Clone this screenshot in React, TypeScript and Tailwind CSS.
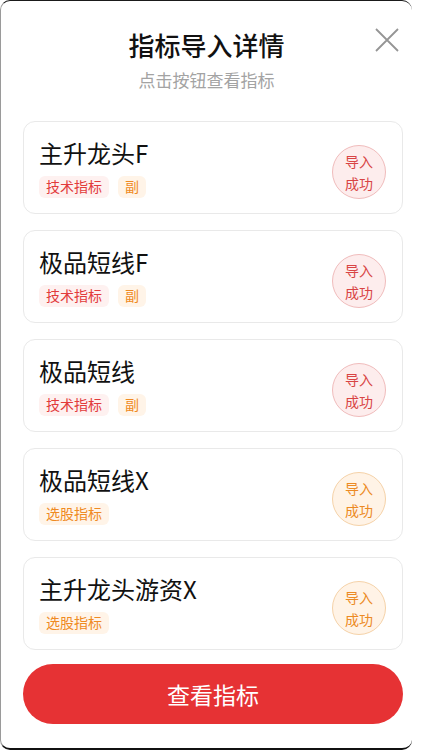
type Item = {
  name: string
  tags: { label: string, tone: "red" | "orange" }[]
  tone: "red" | "orange"
};

const items: Item[] = [
  { name: "主升龙头F", tags: [{ label: "技术指标", tone: "red" }, { label: "副", tone: "orange" }], tone: "red" },
  { name: "极品短线F", tags: [{ label: "技术指标", tone: "red" }, { label: "副", tone: "orange" }], tone: "red" },
  { name: "极品短线", tags: [{ label: "技术指标", tone: "red" }, { label: "副", tone: "orange" }], tone: "red" },
  { name: "极品短线X", tags: [{ label: "选股指标", tone: "orange" }], tone: "orange" },
  { name: "主升龙头游资X", tags: [{ label: "选股指标", tone: "orange" }], tone: "orange" },
];

const Tag = ({ label, tone }: { label: string, tone: "red" | "orange" }) => (
  <span className={
    tone === "red"
      ? "h-[22px] px-[7px] flex items-center rounded-[6px] bg-[#fef1f0] text-[#e23b3b] text-[14px]"
      : "h-[22px] px-[7px] flex items-center rounded-[6px] bg-[#fff4e8] text-[#ef8a22] text-[14px]"
  }>{label}</span>
);

const Badge = ({ tone }: { tone: "red" | "orange" }) => (
  <div className={
    tone === "red"
      ? "w-[54px] h-[54px] mt-[8px] rounded-full border border-[#f0bcbc] bg-[#fdeded] text-[#d84444] flex flex-col items-center justify-center text-[14px] leading-[22px]"
      : "w-[54px] h-[54px] mt-[8px] rounded-full border border-[#f5d2a8] bg-[#fff3e6] text-[#ec8a24] flex flex-col items-center justify-center text-[14px] leading-[22px]"
  }>
    <span>导入</span>
    <span>成功</span>
  </div>
);

const App = () => {
  return (
    <div className="w-[423px] h-[750px] bg-white" style={{ fontFamily: '"Noto Sans CJK SC", "Noto Sans", sans-serif' }}>
      <div className="w-[412px] h-[750px] rounded-[10px] border-t border-t-[#1a1a1a] border-l border-l-[#9a9a9a] border-b-2 border-b-[#111] flex flex-col">
        <div className="relative flex flex-col items-center pt-[26px]">
          <h1 className="text-[26px] leading-[36px] font-medium text-[#111]">指标导入详情</h1>
          <p className="mt-[4px] text-[17px] leading-[26px] text-[#a3a3a3]">点击按钮查看指标</p>
          <button className="absolute right-[13px] top-[27px]">
            <svg width="24" height="24" viewBox="0 0 24 24">
              <path d="M1 1 L23 23 M23 1 L1 23" stroke="#959595" strokeWidth="1.8" fill="none" />
            </svg>
          </button>
        </div>

        <div className="flex flex-col gap-[16px] mt-[28px] pl-[22px] pr-[9px]">
          {items.map((item) => (
            <div key={item.name} className="h-[93px] rounded-[12px] border border-[#e9e9e9] flex justify-between items-center pl-[15px] pr-[16px]">
              <div className="flex flex-col gap-[8px]">
                <span className="text-[24px] leading-[30px] text-[#111]">{item.name}</span>
                <div className="flex gap-[9px]">
                  {item.tags.map(t => <Tag key={t.label} label={t.label} tone={t.tone} />)}
                </div>
              </div>
              <Badge tone={item.tone} />
            </div>
          ))}
        </div>

        <div className="mt-[14px] pl-[22px] pr-[9px]">
          <button className="w-full h-[60px] rounded-full bg-[#e63234] text-white text-[23px]">查看指标</button>
        </div>
      </div>
    </div>
  );
};

export default App;
